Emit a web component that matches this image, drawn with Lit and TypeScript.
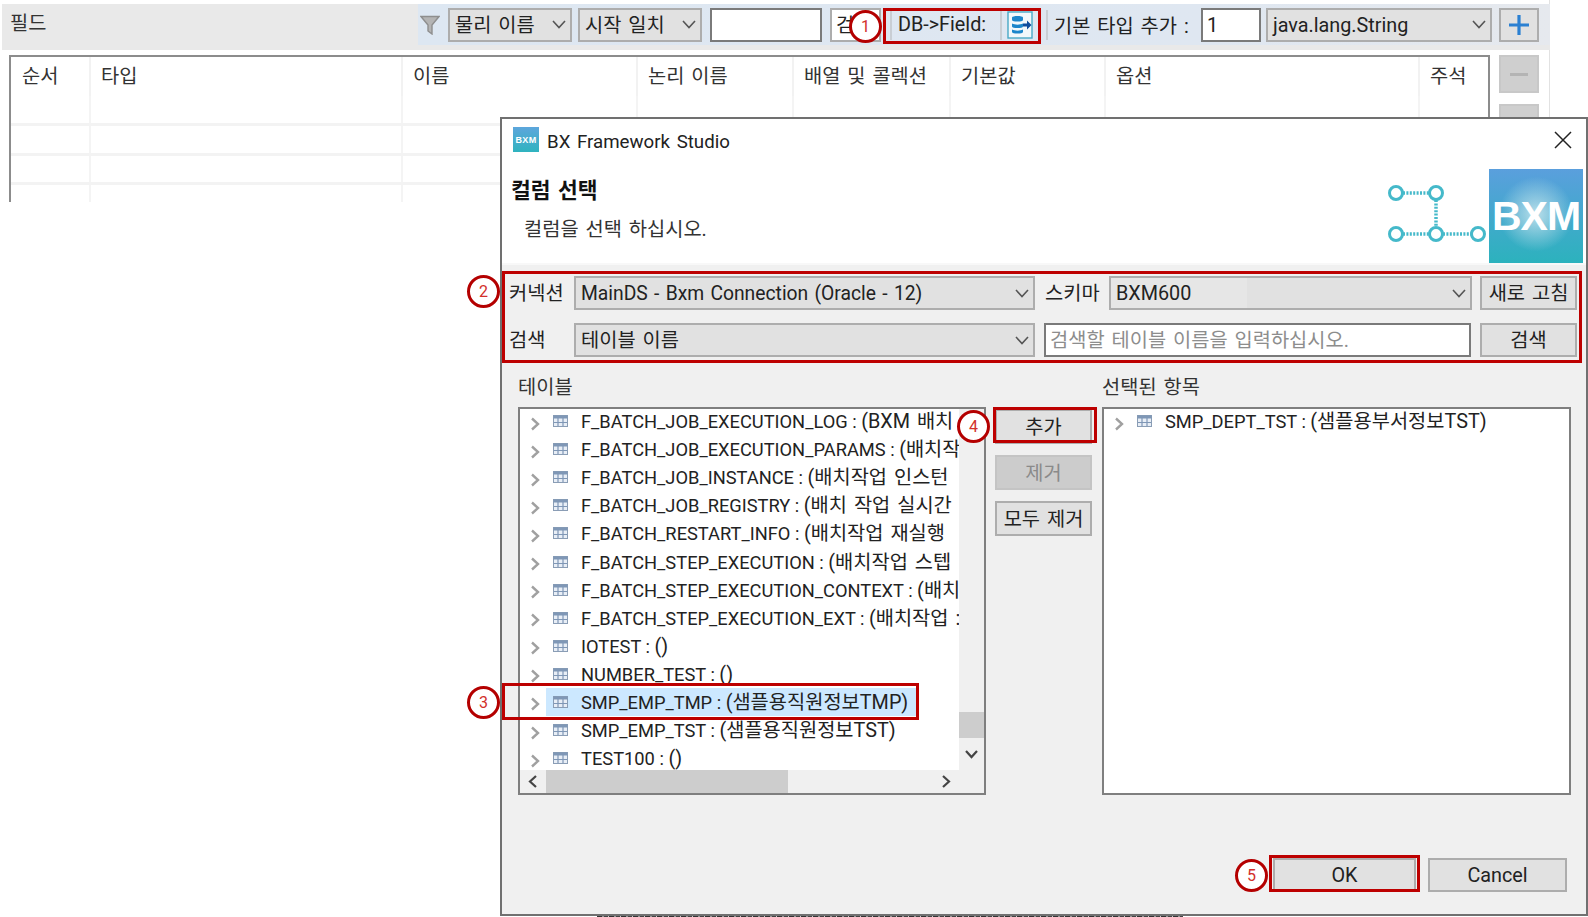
import { LitElement, html, css, svg } from "lit";
import { customElement } from "lit/decorators.js";

const chevDown = html`<svg class="cd" viewBox="0 0 14 9" width="14" height="9"><polyline points="1,1 7,7.5 13,1" fill="none" stroke="#555" stroke-width="1.6"/></svg>`;
const chevRight = html`<svg class="cr" viewBox="0 0 10 14" width="10" height="14"><polyline points="2,1.5 8,7 2,12.5" fill="none" stroke="#a0a0a0" stroke-width="2.4"/></svg>`;
const tableIcon = html`<svg class="ti" viewBox="0 0 15 12" width="15" height="12"><rect x="0.5" y="0.5" width="14" height="11" fill="#e8eef6" stroke="#8a9db5"/><rect x="0.5" y="0.5" width="14" height="3" fill="#7f97b6"/><path d="M5 3v8M10 3v8M1 7.5h13" stroke="#7f97b6" stroke-width="1.2" fill="none"/></svg>`;

const leftRows = [
  ["F_BATCH_JOB_EXECUTION_LOG", "(BXM 배치"],
  ["F_BATCH_JOB_EXECUTION_PARAMS", "(배치작"],
  ["F_BATCH_JOB_INSTANCE", "(배치작업 인스턴"],
  ["F_BATCH_JOB_REGISTRY", "(배치 작업 실시간"],
  ["F_BATCH_RESTART_INFO", "(배치작업 재실행"],
  ["F_BATCH_STEP_EXECUTION", "(배치작업 스텝"],
  ["F_BATCH_STEP_EXECUTION_CONTEXT", "(배치"],
  ["F_BATCH_STEP_EXECUTION_EXT", "(배치작업 :"],
  ["IOTEST", "()"],
  ["NUMBER_TEST", "()"],
  ["SMP_EMP_TMP", "(샘플용직원정보TMP)"],
  ["SMP_EMP_TST", "(샘플용직원정보TST)"],
  ["TEST100", "()"],
];
const columns = ["순서", "타입", "이름", "논리 이름", "배열 및 콜렉션", "기본값", "옵션", "주석"];
const redBoxes = [
  [883, 8, 158, 36],
  [502, 271, 1080, 92],
  [502, 683, 417, 37],
  [993, 407, 104, 36],
  [1269, 855, 151, 37],
];
const circles = [
  [865, 26, "1"],
  [483, 291, "2"],
  [483, 702, "3"],
  [973, 426, "4"],
  [1251, 875, "5"],
];

@customElement("app-root")
export class AppRoot extends LitElement {
  static styles = css`
    :host {
      display: block;
      width: 1588px;
      height: 917px;
      position: relative;
      overflow: hidden;
      background: #fff;
      font-family: Roboto, "Noto Sans CJK KR", sans-serif;
      font-size: 19.8px;
      word-spacing: 2px;
      color: #222;
    }
    * { box-sizing: border-box; }
    svg { display: block; flex: none; }

    .panel { width: 1550px; height: 200px; border-right: 1px solid #e2e2e2; padding-top: 4px; }
    .toolbar { height: 46px; width: 1548px; margin-left: 2px; background: #e9e9e9; display: flex; align-items: flex-start; }
    .tb-title { width: 416px; padding: 8px 0 0 8px; line-height: 24px; color: #333; }
    .tb-right { flex: 1; height: 41px; display: flex; align-items: center; background: linear-gradient(90deg, #dde7f2, #dfe7f1 70%, #e6e9ee); }
    .filter { width: 24px; display: flex; justify-content: center; margin-right: 6px; }

    .sel {
      height: 34px;
      background: #e1e1e1;
      border: 2px solid #adadad;
      display: flex;
      align-items: center;
      justify-content: space-between;
      padding: 0 4px 0 5px;
      white-space: nowrap;
      overflow: hidden;
      color: #222;
    }
    .t { display: block; height: 30px; line-height: 31px; white-space: nowrap; }
    .sel.patch { background: linear-gradient(90deg, #e6e6e6 38%, #e1e1e1 38%); }
    .inp {
      height: 34px;
      background: #fff;
      border: 2px solid #7a7a7a;
      padding: 0 4px;
      overflow: hidden;
      white-space: nowrap;
    }
    .inp.light { border-color: #adadad; }
    .inp.ph { color: #8d8d8d; }
    .btn {
      background: #e1e1e1;
      border: 2px solid #adadad;
      display: flex;
      align-items: center;
      justify-content: center;
      white-space: nowrap;
      color: #222;
    }
    .btn.off { background: #ccc; border-color: #c4c4c4; color: #8a8a8a; }

    .w124 { width: 124px; }
    .ml6 { margin-left: 6px; }
    .i1 { width: 112px; margin-left: 8px; }
    .i2 { width: 51px; margin-left: 8px; }
    .db { margin-left: 2px; padding-left: 7px; height: 36px; display: flex; align-items: center; flex: none; }
    .db-sep { width: 2px; height: 30px; background: #c9ced4; flex: none; }
    .db-l { width: 108px; padding: 1px 0 0 6px; line-height: 24px; white-space: nowrap; }
    .db-ic { width: 35px; display: flex; justify-content: center; }
    .base-sep { margin-left: 9px; }
    .base-l { width: 153px; padding-left: 6px; white-space: nowrap; }
    .i3 { width: 60px; }
    .sel3 { width: 226px; margin-left: 5px; }
    .plus { width: 40px; height: 34px; margin-left: 7px; }

    .content { display: flex; padding: 5px 0 0 9px; }
    .table { width: 1481px; height: 147px; border: solid #8c8c8c; border-width: 2px 2px 0 2px; }
    .thead, .trow { display: grid; grid-template-columns: 80px 312px 235px 156px 157px 155px 314px 68px; }
    .thead { height: 39px; }
    .th { padding: 8px 0 0 10px; border-right: 2px solid #f2f2f2; line-height: 24px; color: #333; white-space: nowrap; }
    .th:first-child { padding-left: 11px; }
    .th:last-child { border-right: none; }
    .trow { border-bottom: 3px solid #f3f3f3; }
    .trow.r1 { height: 30px; }
    .trow.r2 { height: 30px; }
    .trow.r3 { height: 29px; }
    .trow.r4 { height: 17px; border-bottom: none; }
    .td { border-right: 2px solid #f4f4f4; margin-left: 1px; }
    .td:last-child { border-right: none; }
    .side { width: 40px; margin-left: 9px; display: flex; flex-direction: column; gap: 11px; }
    .side .btn { height: 38px; background: #cfcfcf; border-color: #c8c8c8; }

    .dialog {
      position: absolute;
      left: 500px;
      top: 117px;
      width: 1088px;
      height: 799px;
      background: #f0f0f0;
      border: 2px solid #707070;
      display: flex;
      flex-direction: column;
    }
    .under {
      position: absolute;
      left: 597px;
      top: 916px;
      width: 586px;
      height: 1px;
      background: repeating-linear-gradient(90deg, #333 0 5px, #999 5px 7px, #444 7px 11px, #ccc 11px 12px);
    }
    .titlebar { height: 41px; background: #fff; display: flex; align-items: center; padding-left: 11px; flex: none; }
    .mini {
      width: 26px;
      height: 25px;
      background: linear-gradient(180deg, #5da6dc, #2fb3bf);
      color: #fff;
      font: 700 9px "Liberation Sans", sans-serif;
      letter-spacing: 0.4px;
      display: flex;
      align-items: center;
      justify-content: center;
    }
    .title { margin-left: 8px; flex: 1; color: #222; font-size: 18.7px; padding-top: 5px; }
    .close { width: 46px; display: flex; justify-content: center; }

    .banner { height: 105px; background: #fff; display: flex; flex: none; border-bottom: 2px solid #f8f8f8; }
    .banner-l { flex: 1; padding: 17px 0 0 9px; }
    .h { font-weight: 700; font-size: 21.5px; line-height: 28px; color: #111; }
    .sub { margin: 12px 0 0 13px; line-height: 26px; color: #333; }
    .logo-g { margin-top: 24px; margin-right: -1px; }
    .logo {
      width: 94px;
      height: 94px;
      margin: 9px 3px 0 0;
      background: radial-gradient(circle at 50% 48%, rgba(190, 225, 235, 0.95), rgba(190, 225, 235, 0) 55%), linear-gradient(180deg, #5a9fdd, #2cb2bd);
      color: #fff;
      font: 700 41px "Liberation Sans", sans-serif;
      display: flex;
      align-items: center;
      justify-content: center;
      letter-spacing: -1px;
      word-spacing: 0;
    }

    .form {
      margin: 11px 0 0 7px;
      display: grid;
      grid-template-columns: 65px 461px 74px 363px 105px;
      grid-template-rows: 34px 34px;
      row-gap: 13px;
      align-items: center;
    }
    .fl { white-space: nowrap; color: #222; padding-bottom: 4px; }
    .fl.pad { padding-left: 10px; }
    .fb { height: 34px; margin-left: 8px; }
    .finp { grid-column: 3 / span 2; margin: 0 1px 0 9px; }
    .condensed { font-size: 19.3px; word-spacing: 1.5px; }

    .lists { margin-left: 16px; display: grid; grid-template-columns: 468px 116px 469px; grid-template-rows: 50px 388px; flex: none; }
    .ll { padding-top: 19px; line-height: 24px; white-space: nowrap; color: #333; }
    .tree { background: #fff; border: 2px solid #7f7f7f; overflow: hidden; }
    .tree.withbars { display: grid; grid-template-columns: 439px 25px; grid-template-rows: 361px 23px; background: #f0f0f0; }
    .rows { overflow: hidden; background: #fff; }
    .rows-in { margin-top: -2px; }
    .row { height: 28.1px; display: flex; align-items: center; padding-left: 10px; white-space: nowrap; color: #222; }
    .cr { margin-top: 5px; }
    .main { display: flex; align-items: center; height: 28px; margin-left: 6px; padding: 0 8px 0 7px; flex: none; }
    .main.on { background: #cce8ff; }
    .ti { margin-right: 13px; }
    .txt { display: block; height: 28px; line-height: 29px; white-space: nowrap; }
    .nm { font-size: 18.3px; word-spacing: 0; }
    .vbar { display: flex; flex-direction: column; align-items: center; padding-top: 303px; }
    .vthumb { width: 25px; height: 26px; background: #cdcdcd; }
    .varrow { margin-top: 12px; }
    .hbar { display: flex; align-items: center; padding-left: 8px; }
    .hthumb { width: 242px; height: 23px; background: #cdcdcd; margin-left: 8px; }
    .harrow-r { margin-left: 153px; }
    .midb { display: flex; flex-direction: column; gap: 11px; padding: 2px 0 0 9px; }
    .midb .btn { width: 97px; height: 35px; }

    .footer { display: flex; justify-content: flex-end; padding: 63px 19px 0 0; }
    .footer .ok { width: 143px; height: 34px; }
    .footer .cancel { width: 139px; height: 34px; margin-left: 12px; }

    .rb { position: absolute; border: 3px solid #bd0000; }
    .cc {
      position: absolute;
      width: 33px;
      height: 33px;
      margin: -16px 0 0 -16px;
      border-radius: 50%;
      background: #fff;
      border: 3px solid #b40000;
      color: #d2302a;
      font-size: 16px;
      display: flex;
      align-items: center;
      justify-content: center;
    }
  `;

  private sel(text: string, cls = "") {
    return html`<div class="sel ${cls}"><span class="t">${text}</span>${chevDown}</div>`;
  }

  private btn(text: string, cls = "") {
    return html`<div class="btn ${cls}"><span class="t">${text}</span></div>`;
  }

  private treeRow(name: string, comment: string, on = false) {
    return html`<div class="row">${chevRight}<div class="main ${on ? "on" : ""}">${tableIcon}<span class="txt"><span class="nm">${name} : </span>${comment}</span></div></div>`;
  }

  private logoGraph() {
    const nodes = [[11, 9], [51, 9], [11, 50], [51, 50], [93, 50]];
    return html`<svg class="logo-g" width="105" height="60" viewBox="0 0 105 60">
      ${svg`<path d="M18 9H44M51 16V43M18 50H44M58 50H86" stroke="#45b9ca" stroke-width="3.5" stroke-dasharray="2 1.4" fill="none"/>`}
      ${nodes.map(([x, y]) => svg`<circle cx=${x} cy=${y} r="6.5" fill="#fff" stroke="#45b9ca" stroke-width="3"/>`)}
    </svg>`;
  }

  render() {
    return html`
      <div class="panel">
        <div class="toolbar">
          <div class="tb-title">필드</div>
          <div class="tb-right">
            <div class="filter">
              <svg width="20" height="20" viewBox="0 0 20 20"><path d="M1 1.5h18l-7 8.5v9l-4-3v-6z" fill="#b4b4b4" stroke="#8e8e8e" stroke-width="1.4"/></svg>
            </div>
            ${this.sel("물리 이름", "w124")}
            ${this.sel("시작 일치", "w124 ml6")}
            <div class="inp i1"></div>
            <div class="inp light i2"><span class="t">검</span></div>
            <div class="db">
              <div class="db-sep"></div>
              <div class="db-l">DB-&gt;Field:</div>
              <div class="db-sep"></div>
              <div class="db-ic">
                <svg width="26" height="28" viewBox="0 0 26 28">
                  <rect x="1" y="1" width="24" height="26" fill="#f2f8fb" stroke="#49a9c6" stroke-width="1.4"/>
                  <path d="M5 6.5c0-2 11-2 11 0v2.5c0 2-11 2-11 0zM5 12.5c3 1.5 8 1.5 11 0v3c0 2-11 2-11 0zM5 18.5c3 1.500 8 1.500 11 0v2.500c0 2-11 2-11 0z" fill="#1c86cb"/>
                  <path d="M16 12.500h4v-3l4.500 4.500-4.500 4.500v-3h-4z" fill="#0f4c9c"/>
                </svg>
              </div>
              <div class="db-sep base-sep"></div>
            </div>
            <div class="base-l">기본 타입 추가 :</div>
            <div class="inp i3"><span class="t">1</span></div>
            ${this.sel("java.lang.String", "sel3")}
            <div class="btn plus">
              <svg width="22" height="22" viewBox="0 0 22 22"><path d="M11 1v20M1 11h20" stroke="#2b80d2" stroke-width="3.200"/></svg>
            </div>
          </div>
        </div>
        <div class="content">
          <div class="table">
            <div class="thead">${columns.map((c) => html`<div class="th">${c}</div>`)}</div>
            ${["r1", "r2", "r3", "r4"].map(
              (r) => html`<div class="trow ${r}">${columns.map(() => html`<div class="td"></div>`)}</div>`
            )}
          </div>
          <div class="side">
            <div class="btn"><svg width="18" height="3" viewBox="0 0 18 3"><rect width="18" height="3" fill="#b4b4b4"/></svg></div>
            <div class="btn"></div>
          </div>
        </div>
      </div>

      <div class="under"></div>
      <div class="dialog">
        <div class="titlebar">
          <div class="mini">BXM</div>
          <div class="title">BX Framework Studio</div>
          <div class="close">
            <svg width="18" height="18" viewBox="0 0 18 18"><path d="M1 1l16 16M17 1L1 17" stroke="#222" stroke-width="1.500"/></svg>
          </div>
        </div>
        <div class="banner">
          <div class="banner-l">
            <div class="h">컬럼 선택</div>
            <div class="sub">컬럼을 선택 하십시오.</div>
          </div>
          ${this.logoGraph()}
          <div class="logo">BXM</div>
        </div>
        <div class="form">
          <div class="fl">커넥션</div>
          ${this.sel("MainDS - Bxm Connection (Oracle - 12)", "condensed")}
          <div class="fl pad">스키마</div>
          ${this.sel("BXM600", "patch")}
          ${this.btn("새로 고침", "fb")}
          <div class="fl">검색</div>
          ${this.sel("테이블 이름")}
          <div class="inp ph finp"><span class="t">검색할 테이블 이름을 입력하십시오.</span></div>
          ${this.btn("검색", "fb")}
        </div>
        <div class="lists">
          <div class="ll">테이블</div>
          <div></div>
          <div class="ll">선택된 항목</div>
          <div class="tree withbars">
            <div class="rows">
              <div class="rows-in">
                ${leftRows.map(([n, c], i) => this.treeRow(n, c, i === 10))}
              </div>
            </div>
            <div class="vbar">
              <div class="vthumb"></div>
              <svg class="varrow" width="13" height="9" viewBox="0 0 13 9"><polyline points="1,1 6.500,7 12,1" fill="none" stroke="#444" stroke-width="2.200"/></svg>
            </div>
            <div class="hbar">
              <svg width="10" height="13" viewBox="0 0 10 13"><polyline points="8,1 2,6.500 8,12" fill="none" stroke="#444" stroke-width="2.200"/></svg>
              <div class="hthumb"></div>
              <svg class="harrow-r" width="10" height="13" viewBox="0 0 10 13"><polyline points="2,1 8,6.500 2,12" fill="none" stroke="#444" stroke-width="2.200"/></svg>
            </div>
            <div></div>
          </div>
          <div class="midb">
            ${this.btn("추가")}
            ${this.btn("제거", "off")}
            ${this.btn("모두 제거")}
          </div>
          <div class="tree">
            <div class="rows-in">
              ${this.treeRow("SMP_DEPT_TST", "(샘플용부서정보TST)")}
            </div>
          </div>
        </div>
        <div class="footer">
          ${this.btn("OK", "ok")}
          ${this.btn("Cancel", "cancel")}
        </div>
      </div>

      ${redBoxes.map(
        ([x, y, w, h]) => html`<div class="rb" style="left:${x}px;top:${y}px;width:${w}px;height:${h}px"></div>`
      )}
      ${circles.map(([x, y, n]) => html`<div class="cc" style="left:${x}px;top:${y}px">${n}</div>`)}
    `;
  }
}
